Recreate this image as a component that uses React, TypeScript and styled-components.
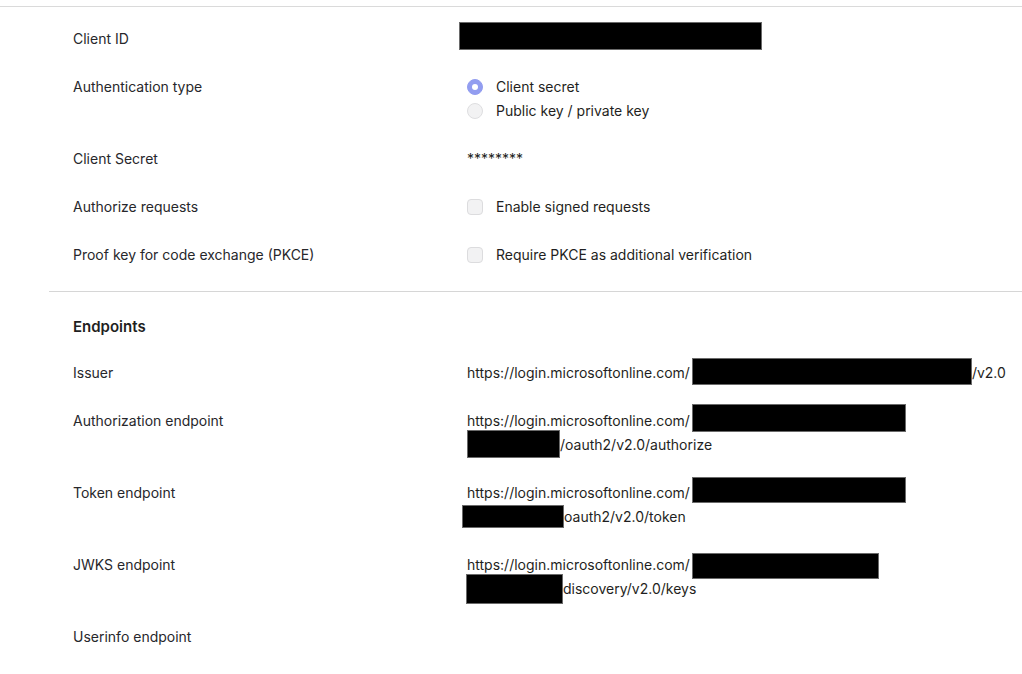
import React from 'react'
import styled, { createGlobalStyle } from 'styled-components'

const GlobalStyle = createGlobalStyle`
  html, body {
    margin: 0;
    padding: 0;
    background: #fff;
  }
  body {
    font-family: Inter, 'Noto Sans', 'Liberation Sans', sans-serif;
    font-size: 14px;
    color: #1f1f22;
  }
`

const Page = styled.div`
  width: 1022px;
  padding-top: 6px;
`

const TopRule = styled.div`
  height: 1px;
  background-color: #dadada;
`

const Section = styled.section`
  margin-left: 49px;
  padding: 20px 0 24px;
  display: flex;
  flex-direction: column;
  gap: 24px;
`

const EndpointsSection = styled(Section)`
  border-top: 1px solid #d6d6d6;
  padding-top: 23px;
`

const Heading = styled.h3`
  margin: 0 0 -2px 24px;
  font-size: 15px;
  font-weight: 600;
  line-height: 24px;
  color: #1f1f22;
`

const Row = styled.div`
  display: grid;
  grid-template-columns: 394px 1fr;
  padding-left: 24px;
  line-height: 24px;
`

const Label = styled.div`
  color: #27272b;
`

const Value = styled.div`
  display: flex;
  flex-direction: column;
  white-space: nowrap;
`

const Line = styled.div`
  height: 24px;
  display: flex;
  align-items: center;
`

const Option = styled.label`
  display: flex;
  align-items: center;
  gap: 13px;
  height: 24px;
  cursor: pointer;
`

const Radio = styled.span<{ checked?: boolean }>`
  box-sizing: border-box;
  width: 16px;
  height: 16px;
  border-radius: 50%;
  display: inline-flex;
  align-items: center;
  justify-content: center;
  background-color: ${(props) => (props.checked ? '#929df0' : '#f2f2f3')};
  border: 1px solid ${(props) => (props.checked ? '#929df0' : '#dedee0')};

  &::after {
    content: '';
    width: 6px;
    height: 6px;
    border-radius: 50%;
    background-color: #fff;
    display: ${(props) => (props.checked ? 'block' : 'none')};
  }
`

const Checkbox = styled.span`
  box-sizing: border-box;
  width: 16px;
  height: 16px;
  border-radius: 4px;
  background-color: #f2f2f3;
  border: 1px solid #dcdcde;
`

const Secret = styled.span`
  font-size: 14px;
  letter-spacing: 0;
`

// black redaction bar; w is its room in the line, bw/h/dx/dy its drawn box
const Redact = styled.span<{ w: number; h: number; bw?: number; dx?: number; dy?: number }>`
  display: inline-block;
  flex: none;
  width: ${(props) => props.w}px;
  height: 24px;
  position: relative;

  &::before {
    content: '';
    position: absolute;
    left: ${(props) => props.dx ?? 0}px;
    top: ${(props) => 12 - props.h / 2 + (props.dy ?? 0)}px;
    width: ${(props) => props.bw ?? props.w}px;
    height: ${(props) => props.h}px;
    background-color: #000;
    border: 1px solid #6a6a6a;
    box-sizing: border-box;
  }
`

const DOMAIN = 'https://login.microsoftonline.com/'

export default function App() {
  return (
    <Page>
      <GlobalStyle />
      <TopRule />
      <Section>
        <Row>
          <Label>Client ID</Label>
          <Value>
            <Line>
              <Redact w={303} h={28} dx={-8} dy={-3} />
            </Line>
          </Value>
        </Row>
        <Row>
          <Label>Authentication type</Label>
          <Value>
            <Option>
              <Radio checked />
              Client secret
            </Option>
            <Option>
              <Radio />
              Public key / private key
            </Option>
          </Value>
        </Row>
        <Row>
          <Label>Client Secret</Label>
          <Value>
            <Line>
              <Secret>********</Secret>
            </Line>
          </Value>
        </Row>
        <Row>
          <Label>Authorize requests</Label>
          <Value>
            <Option>
              <Checkbox />
              Enable signed requests
            </Option>
          </Value>
        </Row>
        <Row>
          <Label>Proof key for code exchange (PKCE)</Label>
          <Value>
            <Option>
              <Checkbox />
              Require PKCE as additional verification
            </Option>
          </Value>
        </Row>
      </Section>
      <EndpointsSection>
        <Heading>Endpoints</Heading>
        <Row>
          <Label>Issuer</Label>
          <Value>
            <Line>
              {DOMAIN}
              <Redact w={282} bw={280} h={27} dx={2} dy={-2} />
              /v2.0
            </Line>
          </Value>
        </Row>
        <Row>
          <Label>Authorization endpoint</Label>
          <Value>
            <Line>
              {DOMAIN}
              <Redact w={214} h={28} dx={2} dy={-3} />
            </Line>
            <Line>
              <Redact w={93} h={28} dy={-1} />
              /oauth2/v2.0/authorize
            </Line>
          </Value>
        </Row>
        <Row>
          <Label>Token endpoint</Label>
          <Value>
            <Line>
              {DOMAIN}
              <Redact w={214} h={26} dx={2} dy={-3} />
            </Line>
            <Line>
              <Redact w={97} bw={102} h={23} dx={-5} dy={-1} />
              oauth2/v2.0/token
            </Line>
          </Value>
        </Row>
        <Row>
          <Label>JWKS endpoint</Label>
          <Value>
            <Line>
              {DOMAIN}
              <Redact w={187} h={26} dx={2} dy={1} />
            </Line>
            <Line>
              <Redact w={96} bw={97} h={30} dx={-1} dy={0} />
              discovery/v2.0/keys
            </Line>
          </Value>
        </Row>
        <Row>
          <Label>Userinfo endpoint</Label>
          <Value />
        </Row>
      </EndpointsSection>
    </Page>
  )
}
